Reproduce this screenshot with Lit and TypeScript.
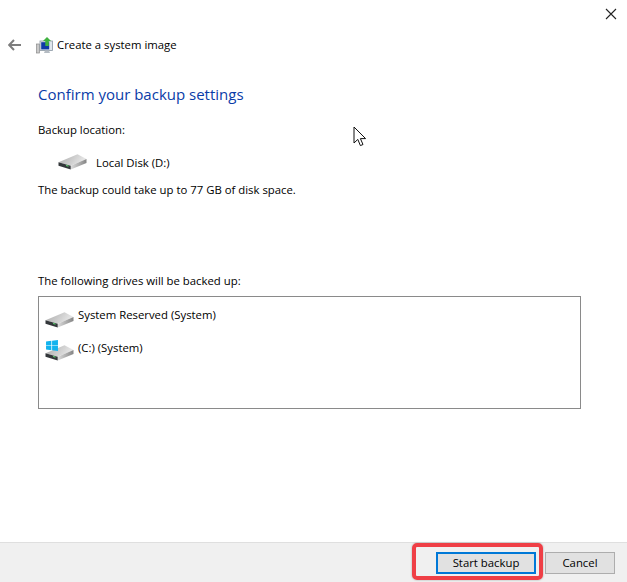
import { LitElement, html, css, svg } from "lit";
import { customElement } from "lit/decorators.js";

const drive = svg`
  <defs>
    <linearGradient id="top" x1="0" y1="0" x2="1" y2="0.3"><stop offset="0" stop-color="#a8a8a8"/><stop offset="1" stop-color="#e8e8e8"/></linearGradient>
    <linearGradient id="side" x1="0" y1="0" x2="1" y2="0"><stop offset="0" stop-color="#dcdcdc"/><stop offset="1" stop-color="#858585"/></linearGradient>
  </defs>
  <path d="M0.5 8.3 L19.5 0.3 L28.5 5 L12.7 11.7 Z" fill="url(#top)"/>
  <path d="M12.7 11.7 L28.5 5 L28.5 9 L12.7 15.6 Z" fill="url(#side)"/>
  <path d="M0.5 8.3 L12.7 11.7 L12.7 15.6 L0.5 11.7 Z" fill="#33373a"/>
  <path d="M8 10.8 L10.5 11.5 L10.5 12.8 L8 12.1 Z" fill="#58c06a"/>
`;

@customElement("app-root")
export class AppRoot extends LitElement {
  static styles = css`
    :host { display: block; width: 627px; height: 582px; position: relative; background: #fff; overflow: hidden;
      font-family: "Open Sans", "Noto Sans", sans-serif; font-size: 11.35px; color: #000; }
    .page { display: flex; flex-direction: column; height: 582px; }
    .main { flex: 1; display: flex; flex-direction: column; min-height: 0; }
    .titlebar { display: flex; justify-content: flex-end; height: 38px; padding-right: 10px; align-items: flex-start; padding-top: 8px; box-sizing: border-box; }
    .close { width: 12px; height: 12px; display: block; }
    .nav { display: flex; align-items: center; height: 16px; margin-top: -1px; padding-left: 8px; }
    .back { width: 13px; height: 12px; display: block; margin-right: 15px; }
    .appicon { width: 17px; height: 17px; display: block; margin-right: 4px; }
    .nav-title { line-height: 16px; }
    .content { padding: 0 46px 0 38px; display: flex; flex-direction: column; }
    h1 { margin: 31px 0 0; font-weight: 400; font-size: 15px; line-height: 20px; color: #0a3ca8; }
    .label { line-height: 16px; }
    .loc-label { margin-top: 18px; }
    .loc { display: flex; align-items: center; gap: 8px; margin: 16px 0 0 20px; height: 16px; }
    .hdd { width: 30px; height: 16px; display: block; flex: none; }
    .note { margin-top: 12px; }
    .drives-label { margin-top: 75px; }
    .box { margin-top: 7px; height: 113px; box-sizing: border-box; border: 1px solid #8a8a8a; padding: 10px 6px; display: flex; flex-direction: column; gap: 10px; }
    .drive { display: flex; align-items: flex-start; gap: 3px; height: 23px; }
    .drive .icon { position: relative; width: 30px; height: 23px; flex: none; }
    .drive .hdd { position: absolute; left: 0; top: 5px; }
    .win { position: absolute; left: 1px; top: 0; width: 12px; height: 11px; display: block; }
    .drive span { line-height: 16px; }
    .footer { height: 40px; flex: none; background: #f0f0f0; border-top: 1px solid #dfdfdf; box-sizing: border-box; display: flex; justify-content: flex-end; align-items: center; gap: 9px; padding: 0 12px 0 0; }
    button { font: inherit; color: #000; background: #e1e1e1; border: 1px solid #adadad; padding: 0; height: 22px; box-sizing: border-box; width: 70px; }
    button.primary { width: 100px; border: 2px solid #0078d7; }
    .highlight { position: absolute; left: 412px; top: 543px; width: 131px; height: 37px; box-sizing: border-box; border: 4px solid #ef3f46; border-radius: 5px; box-shadow: 0 0 2px rgba(0,0,0,0.35); pointer-events: none; }
    .cursor { position: absolute; left: 353px; top: 126px; width: 14px; height: 21px; display: block; }
  `;

  render() {
    return html`
      <div class="page">
        <div class="main">
          <div class="titlebar">
            <svg class="close" viewBox="0 0 12 12"><path d="M1 1 L11 11 M11 1 L1 11" stroke="#222" stroke-width="1.1" fill="none"/></svg>
          </div>
          <div class="nav">
            <svg class="back" viewBox="0 0 13 12"><path d="M6 1 L1.2 6 L6 11 M1.5 6 H13" stroke="#7d7d7d" stroke-width="2" fill="none"/></svg>
            <svg class="appicon" viewBox="0 0 17 17">
              <rect x="0.5" y="7" width="3" height="9" fill="#c9c9c9" stroke="#8a8a8a" stroke-width="0.7"/>
              <rect x="4" y="4" width="12.5" height="9.5" fill="#dfe6ec" stroke="#8b97a3" stroke-width="0.8"/>
              <rect x="5.2" y="5.2" width="8" height="7.2" fill="#0f3aa6"/>
              <path d="M8 16 H14 L13 13.5 H9 Z" fill="#b5bcc3"/>
              <path d="M11 0 L15 4 H12.8 V9 H9.3 V4 H7 Z" fill="#3fb23f"/>
            </svg>
            <span class="nav-title">Create a system image</span>
          </div>
          <div class="content">
            <h1>Confirm your backup settings</h1>
            <div class="label loc-label">Backup location:</div>
            <div class="loc">
              <svg class="hdd" viewBox="0 0 30 16">${drive}</svg>
              <span>Local Disk (D:)</span>
            </div>
            <div class="label note">The backup could take up to 77 GB of disk space.</div>
            <div class="label drives-label">The following drives will be backed up:</div>
            <div class="box">
              <div class="drive">
                <div class="icon"><svg class="hdd" viewBox="0 0 30 16">${drive}</svg></div>
                <span>System Reserved (System)</span>
              </div>
              <div class="drive">
                <div class="icon">
                  <svg class="hdd" viewBox="0 0 30 16">${drive}</svg>
                  <svg class="win" viewBox="0 0 13 12"><path d="M0 1.6 L5.8 0.8 V5.6 H0 Z M6.6 0.7 L13 0 V5.6 H6.6 Z M0 6.4 H5.8 V11.2 L0 10.4 Z M6.6 6.4 H13 V12 L6.6 11.3 Z" fill="#12b3ee"/></svg>
                </div>
                <span>(C:) (System)</span>
              </div>
            </div>
          </div>
        </div>
        <div class="footer">
          <button class="primary">Start backup</button>
          <button>Cancel</button>
        </div>
      </div>
      <div class="highlight"></div>
      <svg class="cursor" viewBox="0 0 14 21"><path d="M1 1 V17 L4.8 13.4 L7.4 19.6 L10 18.5 L7.4 12.6 L12.6 12.6 Z" fill="#fff" stroke="#111" stroke-width="1"/></svg>
    `;
  }
}
